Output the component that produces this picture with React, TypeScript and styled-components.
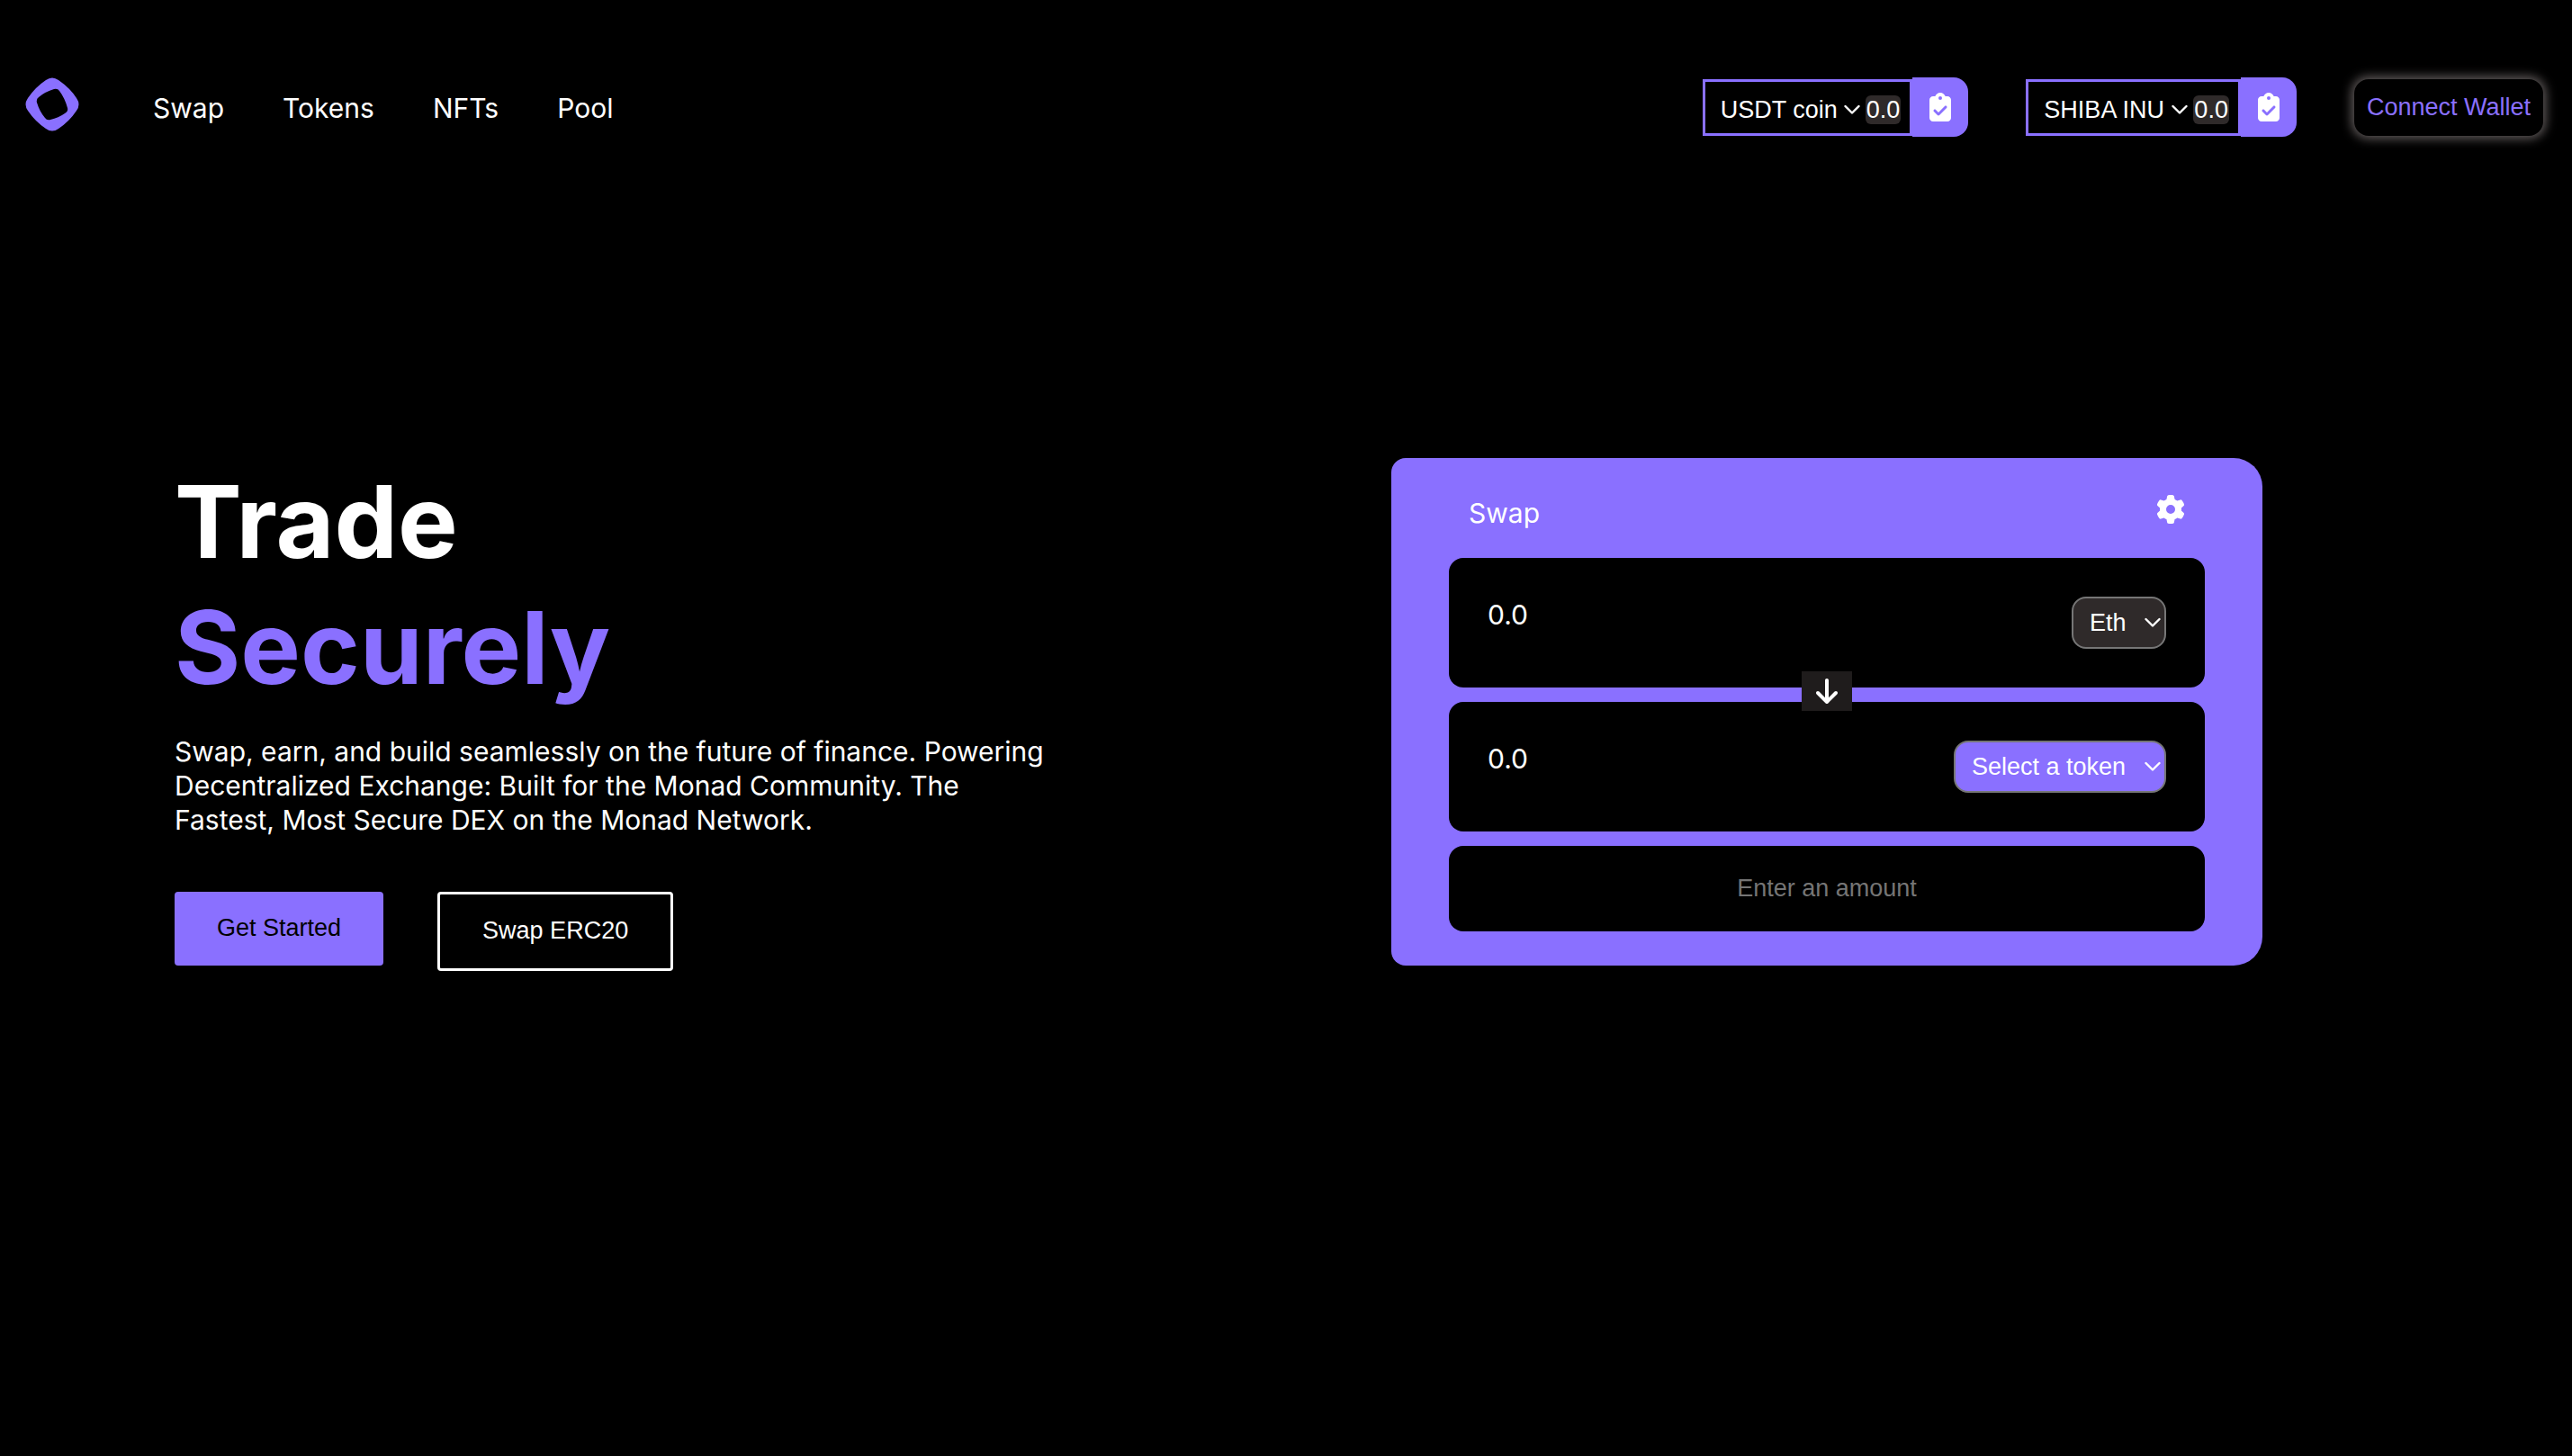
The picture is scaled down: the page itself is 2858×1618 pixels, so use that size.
import React from "react";
import styled, { createGlobalStyle } from "styled-components";
import { FaArrowDown, FaClipboardCheck, FaGear } from "react-icons/fa6";

const violet = "#8a70ff";
const slate = "#2f2a2a";
const inter = `Inter, "Liberation Sans", sans-serif`;
const arial = `"Liberation Sans", Arial, sans-serif`;

const GlobalStyle = createGlobalStyle`
  *, *::before, *::after { box-sizing: border-box; }
  html, body { margin: 0; background: #000; }
  body { font-family: ${inter}; font-size: 30px; color: #fff; }
  button, input, select, output { font-family: ${arial}; font-size: 27px; margin: 0; }
`;

const Header = styled.header`
  display: flex;
  align-items: center;
  justify-content: space-between;
  padding: 86px 32px 0 28px;
`;

const Cluster = styled.div<{ $gap: number }>`
  display: flex;
  align-items: center;
  gap: ${(p) => p.$gap}px;
`;

const Logo = styled.a`
  display: block;
  height: 66px;
  svg { display: block; width: 60px; height: 60px; }
`;

const Nav = styled.nav`
  display: flex;
  gap: 65px;
  padding-top: 2px;
`;

const NavLink = styled.a`
  color: #fff;
  line-height: 38px;
  text-decoration: none;
`;

const TokenGroup = styled.div`
  display: flex;
  align-items: center;
`;

const TokenBox = styled.div`
  display: flex;
  align-items: center;
  height: 63px;
  padding: 5px 10px 0 17px;
  border: 3px solid ${violet};
`;

const SelectWrap = styled.div`
  position: relative;
  display: flex;
`;

const Chevron = styled.svg`
  position: absolute;
  right: 6px;
  top: 50%;
  width: 18px;
  height: 12px;
  margin-top: -6px;
  pointer-events: none;
`;

const BareSelect = styled.select`
  appearance: none;
  border: 0;
  padding: 0 30px 0 0;
  background: transparent;
  color: #fff;
  line-height: 32px;
`;

const PillSelect = styled.select<{ $fill: string }>`
  appearance: none;
  height: 58px;
  padding: 0 42px 0 18px;
  border: 2px solid #767676;
  border-radius: 16px;
  background: ${(p) => p.$fill};
  color: #fff;
`;

const Balance = styled.output`
  padding: 0 1px;
  border-radius: 6px;
  background: ${slate};
  line-height: 32px;
`;

const CopyButton = styled.button`
  display: grid;
  place-items: center;
  width: 62px;
  height: 66px;
  padding: 0;
  border: 0;
  border-radius: 0 16px 16px 0;
  background: ${violet};
  color: #fff;
  svg { width: 24px; height: 32px; }
`;

const WalletButton = styled.button`
  height: 63px;
  padding: 0 14px;
  border: 0;
  border-radius: 16px;
  background: #000;
  box-shadow: 0 0 12px 3px #625c5c;
  color: ${violet};
`;

const Hero = styled.main`
  display: grid;
  grid-template-columns: minmax(0, 1fr) minmax(0, 968px);
  align-items: start;
  padding: 357px 344px 0 194px;
`;

const Title = styled.h1`
  margin: 0;
  font-size: 112px;
  line-height: 140px;
  font-weight: 700;
  span { display: block; color: ${violet}; }
`;

const Lead = styled.p`
  max-width: 980px;
  margin: 27px 0 0;
  line-height: 38px;
`;

const Actions = styled.div`
  display: flex;
  align-items: flex-start;
  gap: 60px;
  margin-top: 61px;
`;

const ActionButton = styled.button<{ $outlined?: boolean }>`
  padding: 25px 47px 26px;
  border: ${(p) => (p.$outlined ? "3px solid #fff" : "0")};
  border-radius: 4px;
  background: ${(p) => (p.$outlined ? "#000" : violet)};
  color: ${(p) => (p.$outlined ? "#fff" : "#000")};
  line-height: 31px;
`;

const Card = styled.section`
  padding: 0 64px 38px;
  border-radius: 16px 32px 32px 16px;
  background: ${violet};
`;

const CardHead = styled.div`
  display: flex;
  align-items: center;
  justify-content: space-between;
  height: 111px;
  padding: 10px 22px 0 22px;
`;

const CardTitle = styled.h2`
  margin: 0;
  font-size: 30px;
  line-height: 38px;
  font-weight: 400;
`;

const GearButton = styled.button`
  padding: 0 0 8px;
  border: 0;
  background: transparent;
  color: #fff;
  svg { display: block; width: 32px; height: 32px; }
`;

const Rows = styled.div`
  position: relative;
  display: grid;
  gap: 16px;
`;

const AmountRow = styled.div`
  display: flex;
  align-items: flex-start;
  justify-content: space-between;
  height: 144px;
  padding: 43px 43px 0 43px;
  border-radius: 16px;
  background: #000;
`;

const AmountInput = styled.input`
  flex: 1;
  min-width: 0;
  height: 40px;
  padding: 0;
  border: 0;
  background: transparent;
  color: #fff;
  font-family: ${inter};
  font-size: 30px;
  &::placeholder { color: #fff; opacity: 1; }
`;

const FlipButton = styled.button`
  position: absolute;
  left: 50%;
  top: 126px;
  display: grid;
  place-items: center;
  width: 56px;
  height: 44px;
  margin-left: -28px;
  padding: 0;
  border: 0;
  background: #1f1c1c;
  color: #fff;
  svg { width: 28px; height: 32px; }
`;

const TotalInput = styled.input`
  width: 100%;
  height: 95px;
  padding: 0;
  border: 0;
  border-radius: 16px;
  background: #000;
  color: #fff;
  text-align: center;
  &::placeholder { color: #757575; opacity: 1; }
`;

function ChevronMark() {
  return (
    <Chevron viewBox="0 0 18 12" aria-hidden="true">
      <path d="M1.5 2 L9 9.5 L16.5 2" fill="none" stroke="#fff" strokeWidth="2.4" strokeLinecap="round" strokeLinejoin="round" />
    </Chevron>
  );
}

function TokenBalance({ token }: { token: string }) {
  return (
    <TokenGroup>
      <TokenBox>
        <SelectWrap>
          <BareSelect aria-label={`${token} balance`}>
            <option>{token}</option>
          </BareSelect>
          <ChevronMark />
        </SelectWrap>
        <Balance>0.0</Balance>
      </TokenBox>
      <CopyButton aria-label={`Copy ${token} address`}>
        <FaClipboardCheck />
      </CopyButton>
    </TokenGroup>
  );
}

function Amount({ label, token, fill }: { label: string; token: string; fill: string }) {
  return (
    <AmountRow>
      <AmountInput aria-label={label} placeholder="0.0" inputMode="decimal" />
      <SelectWrap>
        <PillSelect $fill={fill} aria-label={`${label} token`}>
          <option>{token}</option>
        </PillSelect>
        <ChevronMark />
      </SelectWrap>
    </AmountRow>
  );
}

export default function App() {
  return (
    <>
      <GlobalStyle />
      <Header>
        <Cluster $gap={82}>
          <Logo href="#" aria-label="Home">
            <svg viewBox="0 0 60 60">
              <path
                fill={violet}
                fillRule="evenodd"
                d="M23 3 Q30 -2 37 3 Q50 12 57 23 Q62 30 57 37 Q49 49 37 57 Q30 62 23 57 Q11 49 3 37 Q-2 30 3 23 Q11 11 23 3 Z M15 22 Q12 24 13 28 Q16 38 22 45 Q24 48 28 47 Q37 45 44 40 Q48 38 47 34 Q44 23 38 15 Q36 12 32 13 Q22 16 15 22 Z"
              />
            </svg>
          </Logo>
          <Nav>
            {["Swap", "Tokens", "NFTs", "Pool"].map((item) => (
              <NavLink key={item} href="#">{item}</NavLink>
            ))}
          </Nav>
        </Cluster>
        <Cluster $gap={64}>
          <TokenBalance token="USDT coin" />
          <TokenBalance token="SHIBA INU" />
          <WalletButton>Connect Wallet</WalletButton>
        </Cluster>
      </Header>
      <Hero>
        <div>
          <Title>
            Trade
            <span>Securely</span>
          </Title>
          <Lead>
            Swap, earn, and build seamlessly on the future of finance. Powering Decentralized
            Exchange: Built for the Monad Community. The Fastest, Most Secure DEX on the Monad
            Network.
          </Lead>
          <Actions>
            <ActionButton>Get Started</ActionButton>
            <ActionButton $outlined>Swap ERC20</ActionButton>
          </Actions>
        </div>
        <Card>
          <CardHead>
            <CardTitle>Swap</CardTitle>
            <GearButton aria-label="Settings">
              <FaGear />
            </GearButton>
          </CardHead>
          <Rows>
            <Amount label="You pay" token="Eth" fill={slate} />
            <Amount label="You receive" token="Select a token" fill={violet} />
            <TotalInput aria-label="Amount" placeholder="Enter an amount" />
            <FlipButton aria-label="Switch tokens">
              <FaArrowDown />
            </FlipButton>
          </Rows>
        </Card>
      </Hero>
    </>
  );
}
